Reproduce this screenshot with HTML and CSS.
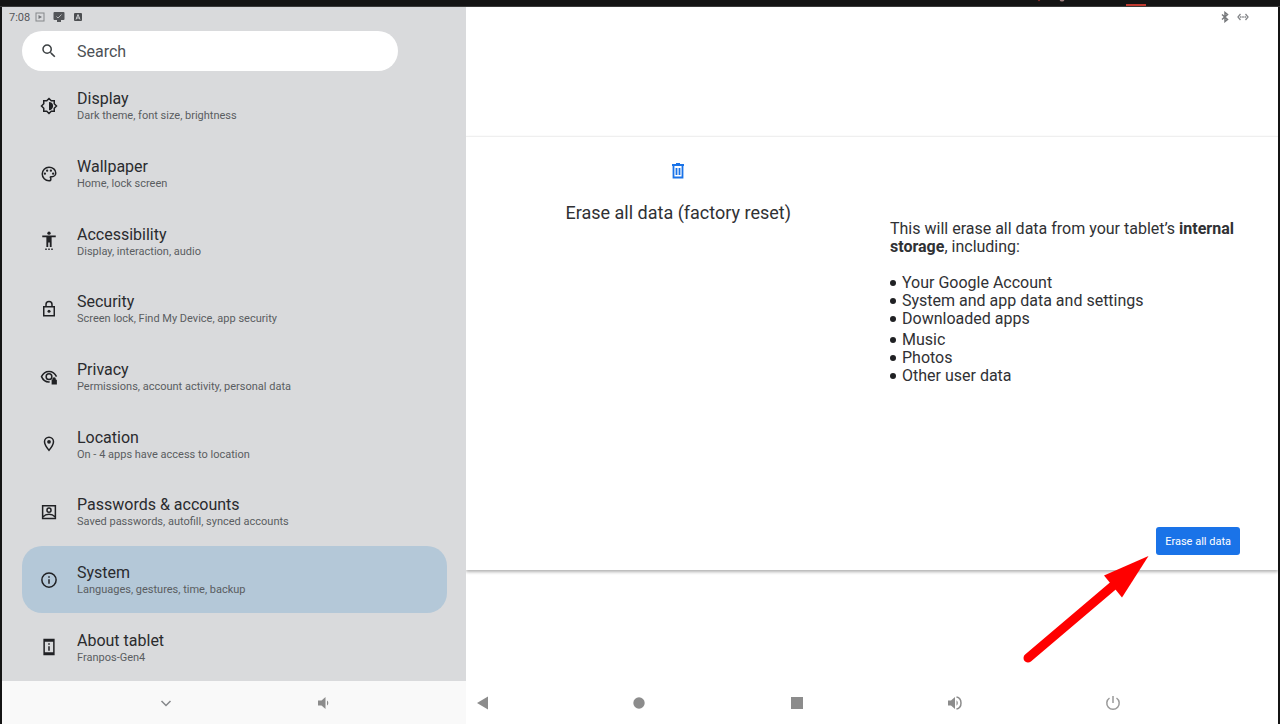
FILE: index.html
```html
<!DOCTYPE html>
<html lang="en">
<head>
    <meta charset="UTF-8">
    <meta name="viewport" content="width=device-width, initial-scale=1.0">
    <title>Settings - Erase all data</title>
    <link rel="stylesheet" href="styles.css">
</head>
<body>
    <div class="top-strip">
        <svg class="strip-dots" viewBox="0 0 30 6" aria-hidden="true">
            <circle cx="3" cy="0" r="1.2" fill="#7a2a28"/>
            <circle cx="26" cy="-1" r="2.5" fill="#a08080"/>
        </svg>
        <span class="strip-mark"></span>
    </div>

    <div class="screen">
        <div class="panes">
            <aside class="sidebar">
                <div class="status-bar">
                    <span class="clock">7:08</span>
                    <svg viewBox="0 0 10 10" width="10" height="10" aria-hidden="true">
                        <rect x="1" y="1" width="8" height="8" fill="none" stroke="#85878a"/>
                        <path d="M3.500 3v4L7 5z" fill="#77797c"/>
                    </svg>
                    <svg viewBox="0 0 12 10" width="12" height="10" aria-hidden="true">
                        <path d="M1.500 0h9a1 1 0 0 1 1 1v6a1 1 0 0 1-1 1H8v2H4V8H1.500a1 1 0 0 1-1-1V1a1 1 0 0 1 1-1z" fill="#535558"/>
                        <path d="M3.500 4.500l1.500 1.500 3.500-3.500" fill="none" stroke="#b5b7b9"/>
                    </svg>
                    <svg viewBox="0 0 10 10" width="10" height="10" aria-hidden="true">
                        <rect x="1" y="1" width="8" height="8" rx="1" fill="#4c4e51"/>
                        <path d="M3 7.500L5 2.500l2 5M3.500 6h3" fill="none" stroke="#d0d2d4"/>
                    </svg>
                </div>

                <form class="search">
                    <label for="search" aria-label="Search">
                        <svg class="icon" viewBox="0 0 24 24"><path d="M15.500 14h-.79l-.28-.27A6.470 6.470 0 0 0 16 9.500 6.500 6.500 0 1 0 9.500 16c1.610 0 3.090-.59 4.230-1.570l.27.28v.79l5 4.990L20.490 19l-4.990-5zm-6 0C7.010 14 5 11.990 5 9.500S7.010 5 9.500 5 14 7.010 14 9.500 11.990 14 9.500 14z"/></svg>
                    </label>
                    <input type="text" id="search" placeholder="Search">
                </form>

                <nav class="menu">
                    <a class="menu-item" href="#display">
                        <svg class="icon" viewBox="0 0 24 24">
                            <path class="line" d="M5 5h4l3-3 3 3h4v4l3 3-3 3v4h-4l-3 3-3-3H5v-4l-3-3 3-3z"/>
                            <path d="M12 6.500v11a5.500 5.500 0 0 0 0-11z"/>
                        </svg>
                        <span class="menu-text">
                            <span class="menu-title">Display</span>
                            <span class="menu-sub">Dark theme, font size, brightness</span>
                        </span>
                    </a>
                    <a class="menu-item" href="#wallpaper">
                        <svg class="icon" viewBox="0 0 24 24">
                            <path class="line" d="M12 3a9 9 0 0 0 0 18c1.400 0 2.500-1.100 2.500-2.500 0-.6-.2-1.200-.6-1.700-.4-.8.100-1.300.6-1.300H16c2.800 0 5-2.200 5-5C21 6.400 17 3 12 3z"/>
                            <circle cx="6.500" cy="11.500" r="1.500"/>
                            <circle cx="9.500" cy="7.500" r="1.500"/>
                            <circle cx="14.500" cy="7.500" r="1.500"/>
                            <circle cx="17.500" cy="11.500" r="1.500"/>
                        </svg>
                        <span class="menu-text">
                            <span class="menu-title">Wallpaper</span>
                            <span class="menu-sub">Home, lock screen</span>
                        </span>
                    </a>
                    <a class="menu-item" href="#accessibility">
                        <svg class="icon" viewBox="0 0 24 24">
                            <circle cx="12" cy="1.500" r="2.200"/>
                            <path d="M21 7h-5.500v13h-2.500v-6h-2v6H8.500V7H3V4.800h18zM7 22h2v2H7zM11 22h2v2h-2zM15 22h2v2h-2z"/>
                        </svg>
                        <span class="menu-text">
                            <span class="menu-title">Accessibility</span>
                            <span class="menu-sub">Display, interaction, audio</span>
                        </span>
                    </a>
                    <a class="menu-item" href="#security">
                        <svg class="icon" viewBox="0 0 24 24">
                            <path class="line" d="M5 9h14v12H5zM8 9V6a4 4 0 0 1 8 0v3"/>
                            <circle cx="12" cy="15" r="2"/>
                        </svg>
                        <span class="menu-text">
                            <span class="menu-title">Security</span>
                            <span class="menu-sub">Screen lock, Find My Device, app security</span>
                        </span>
                    </a>
                    <a class="menu-item" href="#privacy">
                        <svg class="icon" viewBox="0 0 24 24">
                            <path class="line" d="M13 18.500C8 19 4 16 2 11.500 4 7 8 4.500 12 4.500s8 2.500 10 7"/>
                            <circle class="line" cx="12" cy="11.500" r="3.800"/>
                            <path d="M15.500 15.500h1v-1a2.300 2.300 0 0 1 4.600 0v1h1.400v6.500h-7z"/>
                        </svg>
                        <span class="menu-text">
                            <span class="menu-title">Privacy</span>
                            <span class="menu-sub">Permissions, account activity, personal data</span>
                        </span>
                    </a>
                    <a class="menu-item" href="#location">
                        <svg class="icon" viewBox="0 0 24 24">
                            <path class="line" d="M12 3a6 6 0 0 0-6 6c0 4.200 6 11.500 6 11.500S18 13.200 18 9a6 6 0 0 0-6-6z"/>
                            <circle cx="12" cy="9" r="2.500"/>
                        </svg>
                        <span class="menu-text">
                            <span class="menu-title">Location</span>
                            <span class="menu-sub">On - 4 apps have access to location</span>
                        </span>
                    </a>
                    <a class="menu-item" href="#accounts">
                        <svg class="icon" viewBox="0 0 24 24">
                            <path class="line" d="M3.500 3.500h17v17h-17zM4 18.500c4-4.500 12-4.500 16 0"/>
                            <circle class="line" cx="12" cy="9.500" r="2.700"/>
                        </svg>
                        <span class="menu-text">
                            <span class="menu-title">Passwords &amp; accounts</span>
                            <span class="menu-sub">Saved passwords, autofill, synced accounts</span>
                        </span>
                    </a>
                    <a class="menu-item active" href="#system" aria-current="page">
                        <svg class="icon" viewBox="0 0 24 24">
                            <circle class="line" cx="12" cy="12" r="9.500"/>
                            <path d="M11 7h2v2h-2zM11 11h2v6h-2z"/>
                        </svg>
                        <span class="menu-text">
                            <span class="menu-title">System</span>
                            <span class="menu-sub">Languages, gestures, time, backup</span>
                        </span>
                    </a>
                    <a class="menu-item" href="#about">
                        <svg class="icon" viewBox="0 0 24 24">
                            <path class="line" d="M5.500 2h13v20h-13zM5.500 4h13M5.500 20h13"/>
                            <path d="M11 7h2v2h-2zM11 11h2v6h-2z"/>
                        </svg>
                        <span class="menu-text">
                            <span class="menu-title">About tablet</span>
                            <span class="menu-sub">Franpos-Gen4</span>
                        </span>
                    </a>
                </nav>
            </aside>

            <main class="content">
                <div class="status-bar status-right">
                    <svg viewBox="0 0 8 12" width="8" height="12" aria-hidden="true">
                        <path d="M1 3.500l5.500 5L4 10.500v-9l2.500 2-5.500 5" fill="none" stroke="#77797c" stroke-width="1.500"/>
                    </svg>
                    <svg viewBox="0 0 12 10" width="12" height="10" aria-hidden="true">
                        <path d="M3.500 2L1 5l2.500 3M8.500 2L11 5 8.500 8M3 5h1.500M5.200 5h1.600M7.500 5H9" fill="none" stroke="#85878a" stroke-width="1.300"/>
                    </svg>
                </div>

                <div class="card-area">
                    <section class="card">
                        <div class="card-head">
                            <svg class="trash" viewBox="0 0 14 16" width="14" height="16" aria-hidden="true">
                                <path d="M1 2h12M2.500 2.500v12h9v-12M5.500 5v7M8.500 5v7" fill="none" stroke="#1a73e8" stroke-width="1.800"/>
                                <path d="M5 0h4v2H5z" fill="#1a73e8"/>
                            </svg>
                            <h1>Erase all data (factory reset)</h1>
                        </div>
                        <div class="card-body">
                            <p>This will erase all data from your tablet’s <b>internal storage</b>, including:</p>
                            <ul>
                                <li>Your Google Account</li>
                                <li>System and app data and settings</li>
                                <li>Downloaded apps</li>
                            </ul>
                            <ul class="media-list">
                                <li>Music</li>
                                <li>Photos</li>
                                <li>Other user data</li>
                            </ul>
                            <div class="card-action">
                                <button type="button" class="erase-btn">Erase all data</button>
                                <svg class="arrow" viewBox="0 0 130 110" aria-hidden="true">
                                    <path d="M8 103L94 30" stroke="#ff0000" stroke-width="9" stroke-linecap="round"/>
                                    <path d="M128.500 1L84 20.500 102 42.500z" fill="#ff0000"/>
                                </svg>
                            </div>
                        </div>
                    </section>
                </div>
            </main>
        </div>

        <div class="nav-bar">
            <button type="button" aria-label="Hide">
                <svg viewBox="0 0 18 18"><path d="M4.500 7L9 11.500 13.500 7" fill="none" stroke="#85878a" stroke-width="1.500"/></svg>
            </button>
            <button type="button" aria-label="Volume down">
                <svg viewBox="0 0 18 18"><path d="M3 6.500h3.500L10.500 3v12l-4-3.500H3zM12 6.500c1.800 1 1.800 4 0 5z"/></svg>
            </button>
            <button type="button" aria-label="Back">
                <svg viewBox="0 0 18 18"><path d="M15 2.500v13L4 9z"/></svg>
            </button>
            <button type="button" aria-label="Home">
                <svg viewBox="0 0 18 18"><circle cx="9" cy="9" r="5.700"/></svg>
            </button>
            <button type="button" aria-label="Recent apps">
                <svg viewBox="0 0 18 18"><path d="M3 3h12v12H3z"/></svg>
            </button>
            <button type="button" aria-label="Volume up">
                <svg viewBox="0 0 18 18"><path d="M2 6.500h3L9 3v12l-4-3.500H2zM10.500 6.300c1.800 1 1.800 4.400 0 5.400z"/><path d="M10.500 3c6 1.200 6 10.800 0 12" fill="none" stroke="#8c8c8c" stroke-width="1.500"/></svg>
            </button>
            <button type="button" aria-label="Power">
                <svg viewBox="0 0 18 18"><path d="M9 2v7M5.500 4a6.200 6.200 0 1 0 7 0" fill="none" stroke="#999" stroke-width="1.500"/></svg>
            </button>
        </div>
    </div>
</body>
</html>
```
FILE: styles.css
```css
* {
    margin: 0;
    padding: 0;
    box-sizing: border-box;
    font-family: Roboto, sans-serif;
}

:root {
    --sidebar: 36.4%;
}

body {
    display: flex;
    flex-direction: column;
    min-height: 100vh;
    background-color: #141414;
    color: #303134;
}

.top-strip {
    display: flex;
    justify-content: flex-end;
    align-items: flex-end;
    gap: 60px;
    height: 7px;
    padding-right: 134px;
    border-bottom: 1px solid #3a3a3a;
}

.strip-dots {
    width: 30px;
    height: 6px;
}

.strip-mark {
    width: 20px;
    height: 2px;
    background: #c0392f;
}

.screen {
    flex: 1;
    display: flex;
    flex-direction: column;
    margin: 0 2px;
    background: white;
}

.panes {
    flex: 1;
    display: flex;
}

/* Left pane */
.sidebar {
    display: flex;
    flex-direction: column;
    width: var(--sidebar);
    background: #d9dadc;
}

.status-bar {
    display: flex;
    align-items: center;
    gap: 8px;
    height: 20px;
    padding-left: 7px;
}

.clock {
    font-size: 11px;
    color: #55575a;
    margin-right: -3px;
}

.status-right {
    justify-content: flex-end;
    padding-right: 29px;
}

.search {
    display: flex;
    align-items: center;
    gap: 19px;
    height: 40px;
    margin: 4px 68px 1px 20px;
    padding: 0 18px;
    border-radius: 20px;
    background: white;
    color: #3c4043;
}

.search label {
    display: flex;
}

.search input {
    flex: 1;
    min-width: 0;
    border: none;
    outline: none;
    background: none;
    font-size: 16px;
    color: #3c4043;
}

.search input::placeholder {
    color: #4d5155;
    opacity: 1;
}

.icon {
    width: 18px;
    height: 18px;
    flex-shrink: 0;
    fill: currentColor;
    overflow: visible;
}

.icon .line {
    fill: none;
    stroke: currentColor;
    stroke-width: 2;
}

.menu {
    flex: 1;
    display: flex;
    flex-direction: column;
    padding: 0 19px 0 20px;
}

.menu-item {
    flex: 1;
    display: flex;
    align-items: center;
    gap: 19px;
    padding: 0 18px;
    border-radius: 20px;
    color: #202124;
    text-decoration: none;
}

.menu-item.active {
    background: #b4c8d8;
}

.menu-text {
    padding-top: 2px;
}

.menu-title {
    display: block;
    font-size: 16px;
    line-height: 19px;
    color: #2a2b2e;
}

.menu-sub {
    display: block;
    font-size: 11px;
    line-height: 16px;
    color: #5a5d61;
}

/* Right pane */
.content {
    flex: 1;
    display: flex;
    flex-direction: column;
}

.card-area {
    flex: 1;
    display: flex;
    flex-direction: column;
    justify-content: center;
    padding-bottom: 2px;
    overflow: hidden;
}

.card {
    display: grid;
    grid-template-columns: 1fr 350px;
    min-height: 434px;
    padding-right: 38px;
    border-top: 1px solid #efefef;
    box-shadow: 0 2px 3px rgba(0, 0, 0, 0.3);
}

.card-head {
    display: flex;
    flex-direction: column;
    align-items: center;
    gap: 22px;
    padding-top: 26px;
}

.card-head h1 {
    font-size: 18px;
    line-height: 24px;
    font-weight: 400;
}

.card-body {
    display: flex;
    flex-direction: column;
    padding: 83px 0 15px;
    font-size: 16px;
    line-height: 18px;
}

.card-body ul {
    list-style: none;
    margin-top: 18px;
}

.card-body .media-list {
    margin-top: 3px;
}

.card-body li {
    display: flex;
    align-items: center;
    gap: 6px;
}

.card-body li::before {
    content: "";
    width: 6px;
    height: 6px;
    border-radius: 50%;
    background: #202124;
}

.card-action {
    position: relative;
    margin-top: auto;
    text-align: right;
}

.erase-btn {
    height: 28px;
    padding: 0 9px;
    border: none;
    border-radius: 3px;
    background: #1a73e8;
    color: white;
    font-size: 11px;
    cursor: pointer;
}

/* Pointer drawn over the page, just below the button */
.arrow {
    position: absolute;
    top: 28px;
    right: 90px;
    width: 130px;
    height: 110px;
}

/* Bottom navigation */
.nav-bar {
    display: grid;
    grid-template-columns: repeat(7, 1fr);
    height: 43px;
    padding: 0 86px 0 85px;
    background: linear-gradient(to right, #f9f9f9 var(--sidebar), white var(--sidebar));
}

.nav-bar button {
    display: flex;
    align-items: center;
    justify-content: center;
    border: none;
    background: none;
    cursor: pointer;
}

.nav-bar svg {
    width: 18px;
    height: 18px;
    fill: #8c8c8c;
}
```
